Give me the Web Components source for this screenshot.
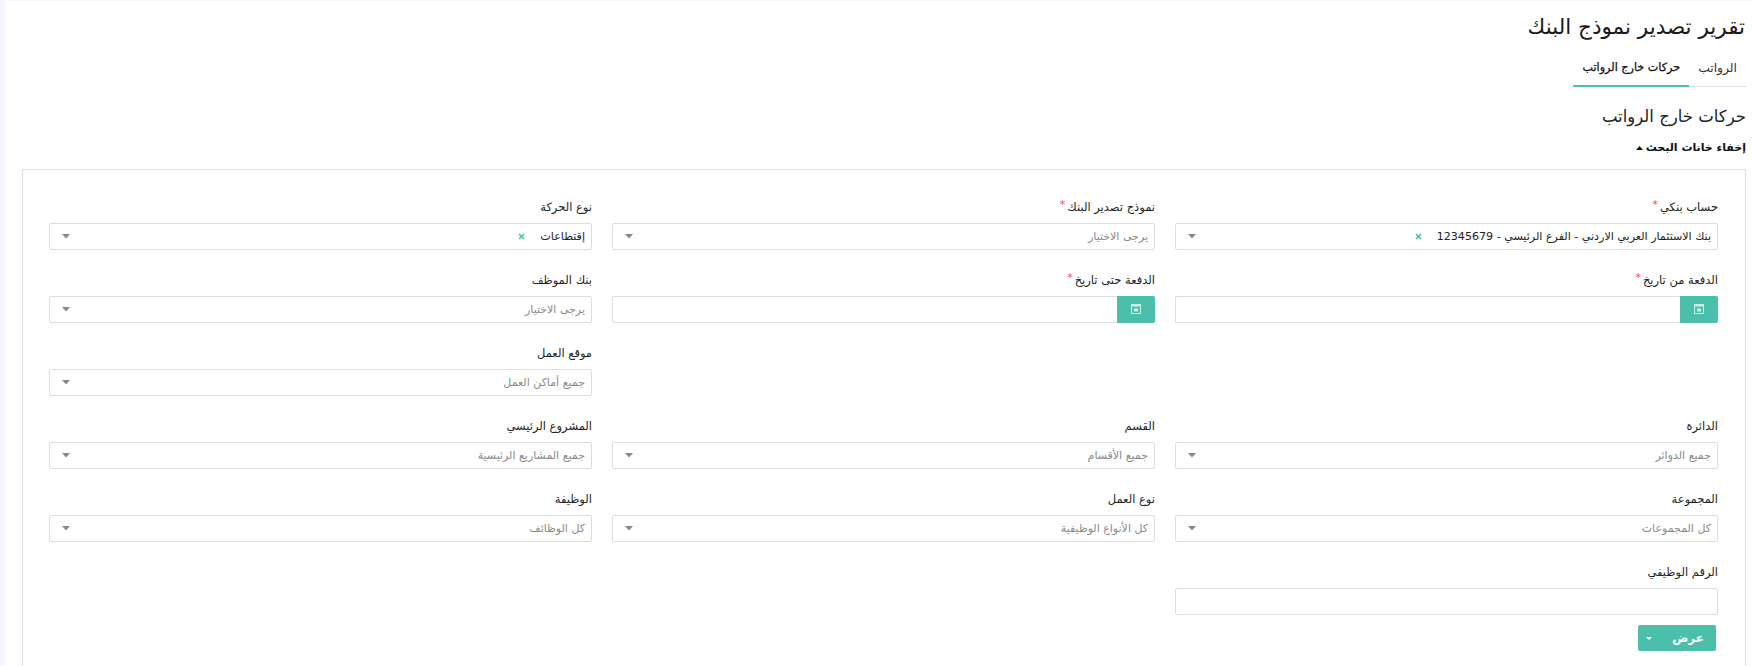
<!DOCTYPE html>
<html lang="ar" dir="rtl"><head><meta charset="utf-8">
<style>
html,body{margin:0;padding:0;background:#fff;height:666px;overflow:hidden}
body{font-family:"DejaVu Sans","Noto Sans",sans-serif;color:#222}
</style></head><body>
<report-page>
  <page-title slot="title">تقرير تصدير نموذج البنك</page-title>
  <tab-bar slot="tabs"><tab-item>الرواتب</tab-item><tab-item active>حركات خارج الرواتب</tab-item></tab-bar>
  <section-title slot="section">حركات خارج الرواتب</section-title>
  <search-toggle slot="toggle">إخفاء خانات البحث</search-toggle>
  <filter-card slot="card">
    <form-field label="حساب بنكي" required><select-box value="بنك الاستثمار العربي الاردني - الفرع الرئيسي - 12345679"></select-box></form-field>
    <form-field label="نموذج تصدير البنك" required><select-box placeholder="يرجى الاختيار"></select-box></form-field>
    <form-field label="نوع الحركة"><select-box value="إقتطاعات"></select-box></form-field>

    <form-field label="الدفعة من تاريخ" required><date-box></date-box></form-field>
    <form-field label="الدفعة حتى تاريخ" required><date-box></date-box></form-field>
    <form-field label="بنك الموظف"><select-box placeholder="يرجى الاختيار"></select-box></form-field>

    <form-field></form-field>
    <form-field></form-field>
    <form-field label="موقع العمل"><select-box placeholder="جميع أماكن العمل"></select-box></form-field>

    <form-field label="الدائرة"><select-box placeholder="جميع الدوائر"></select-box></form-field>
    <form-field label="القسم"><select-box placeholder="جميع الأقسام"></select-box></form-field>
    <form-field label="المشروع الرئيسي"><select-box placeholder="جميع المشاريع الرئيسية"></select-box></form-field>

    <form-field label="المجموعة"><select-box placeholder="كل المجموعات"></select-box></form-field>
    <form-field label="نوع العمل"><select-box placeholder="كل الأنواع الوظيفية"></select-box></form-field>
    <form-field label="الوظيفة"><select-box placeholder="كل الوظائف"></select-box></form-field>

    <form-field label="الرقم الوظيفي"><text-box></text-box><drop-button>عرض</drop-button></form-field>
  </filter-card>
</report-page>
<script>
function def(name, html){
  customElements.define(name, class extends HTMLElement{
    constructor(){super();const r=this.attachShadow({mode:"open"});if(typeof html!=="function")r.innerHTML=html;}
    connectedCallback(){ if(typeof html==="function"){this.shadowRoot.innerHTML=html(this);} }
  });
}
const arrow=`<svg width="8" height="5" viewBox="0 0 8 5" style="display:block"><path d="M0 0h8L4 4.5z" fill="#888"/></svg>`;
def("report-page",`<style>
:host{display:block;height:666px;box-sizing:border-box;background:#fff;border-top:1px solid #f7f7f9;position:relative;overflow:hidden}
.wrap{display:flex;flex-direction:column;margin-right:7px;margin-left:22px;padding-top:13px;height:100%;box-sizing:border-box}
.strip{position:absolute;left:0;top:0;bottom:0;width:5px;background:#f5f7ff}
.tabs{display:flex;margin-top:10px}
</style><div class="strip"></div><div class="wrap"><slot name="title"></slot><div class="tabs"><slot name="tabs"></slot></div><slot name="section"></slot><slot name="toggle"></slot><slot name="card"></slot></div>`);
def("page-title",`<style>:host{display:block;font-size:21.5px;line-height:26px;color:#1a1a1a;padding-right:1px}</style><slot></slot>`);
def("tab-bar",`<style>:host{display:inline-flex;border-bottom:1px solid #ddd;height:37px;box-sizing:border-box}</style><slot></slot>`);
def("tab-item",`<style>:host{display:block;padding:0 9px;font-size:12.3px;line-height:36px;height:37px;box-sizing:border-box;color:#333}
:host([active]){border-bottom:2px solid #4bbfa9;color:#111;font-size:11.2px;-webkit-text-stroke:.25px #111}</style><slot></slot>`);
def("section-title",`<style>:host{display:block;font-size:16.5px;line-height:24px;margin-top:18px;color:#222}</style><slot></slot>`);
def("search-toggle",`<style>:host{display:flex;align-items:center;gap:3px;font-size:11px;line-height:16px;margin-top:11px;font-weight:bold;color:#111}
svg{display:block}</style><slot></slot><svg width="7" height="4" viewBox="0 0 7 4"><path d="M0 4h7L3.5 0z" fill="#111"/></svg>`);
def("filter-card",`<style>:host{display:block;border:1px solid #ddd;margin-top:13px;padding:27px 27px 0;flex:1;box-sizing:border-box;margin-bottom:-40px}
.g{display:grid;grid-template-columns:repeat(3,543px);column-gap:20px}</style><div class="g"><slot></slot></div>`);
def("form-field",h=>`<style>:host{display:block;height:73px;box-sizing:border-box;position:relative}
.l{font-size:11.5px;line-height:16px;height:24px;padding-top:2px;color:#222}
.r{color:#f44;font-size:11px;position:relative;top:-3px;margin-right:2px}</style>
${h.hasAttribute("label")?`<div class="l">${h.getAttribute("label")}${h.hasAttribute("required")?`<span class="r">*</span>`:""}</div>`:""}<slot></slot>`);
def("select-box",h=>{const v=h.getAttribute("value"),p=h.getAttribute("placeholder");return `<style>:host{display:flex;align-items:center;height:27px;box-sizing:border-box;border:1px solid #ddd;border-radius:2px;background:#fff;padding:0 6px 0 12px;font-size:11px}
.v{color:#222;white-space:nowrap;font-size:11.1px}.p{color:#8a8a8a;white-space:nowrap}
.x{margin-right:15px;display:block}.a{margin-right:auto}</style>
${v?`<span class="v">${v}</span><svg class="x" width="7" height="7" viewBox="0 0 7 7"><path d="M1 1l5 5M6 1L1 6" stroke="#4bbfa9" stroke-width="1.6"/></svg>`:`<span class="p">${p||""}</span>`}<span class="a">${arrow}</span>`});
def("date-box",`<style>:host{display:flex;height:27px;box-sizing:border-box}
.b{width:38px;flex:none;background:#4bbfa9;border-radius:0 2px 2px 0;display:flex;align-items:center;justify-content:center;padding-bottom:1px;box-sizing:border-box}
.i{flex:1;border:1px solid #ddd;border-right:0;border-radius:2px 0 0 2px}</style>
<div class="b"><svg width="10" height="10" viewBox="0 0 10 10"><rect x=".5" y=".5" width="9" height="9" fill="none" stroke="#c9eee6"/><rect x=".5" y=".5" width="9" height="2" fill="#c9eee6"/><rect x="3" y="4.5" width="4" height="3" fill="#c9eee6"/></svg></div><div class="i"></div>`);
def("text-box",`<style>:host{display:block;height:27px;box-sizing:border-box;border:1px solid #ddd;border-radius:2px}</style>`);
def("drop-button",`<style>:host{display:flex;align-items:center;justify-content:space-between;width:78px;height:26px;box-sizing:border-box;margin:10px 2px 0 0;background:#4bbfa9;border-radius:2px;color:#fff;font-size:12px;font-weight:bold;padding:0 12px 0 8px}
svg{display:block}</style><slot></slot><svg width="6" height="3" viewBox="0 0 6 3"><path d="M0 0h6L3 3z" fill="#fff"/></svg>`);
</script>
</body></html>
